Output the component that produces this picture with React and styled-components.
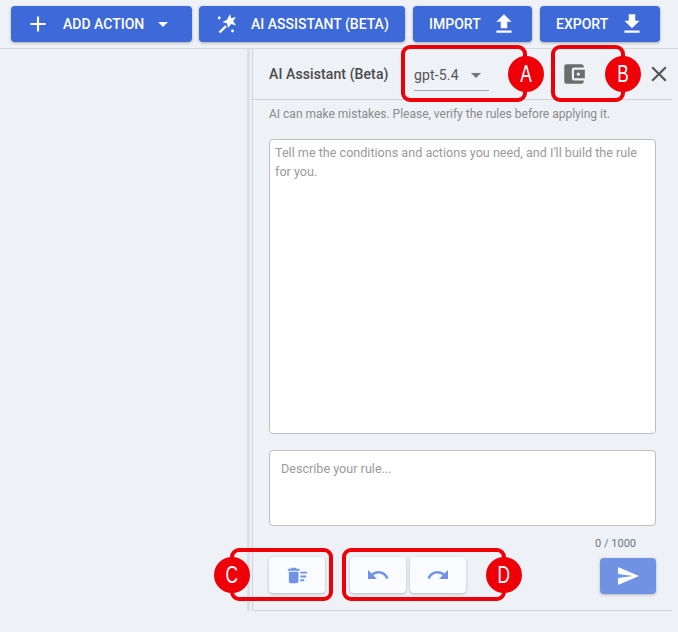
import React from 'react';
import styled, { createGlobalStyle } from 'styled-components';
import {
  MdAdd,
  MdArrowDropDown,
  MdFileUpload,
  MdFileDownload,
  MdAccountBalanceWallet,
  MdClose,
  MdDeleteSweep,
  MdUndo,
  MdRedo,
  MdSend,
} from 'react-icons/md';

const GlobalStyle = createGlobalStyle`
  html, body {
    margin: 0;
    padding: 0;
    background: #eef1f6;
    font-family: Roboto, "Liberation Sans", sans-serif;
  }
  * {
    box-sizing: border-box;
  }
`;

const Page = styled.div`
  position: relative;
  width: 678px;
  height: 632px;
  overflow: hidden;
`;

const Toolbar = styled.div`
  display: flex;
  height: 49px;
  padding: 6px 18px 0 11px;
  border-bottom: 1px solid #d5d8de;
`;

const ActionButton = styled.button`
  display: flex;
  align-items: center;
  gap: ${(p) => p.$gap}px;
  width: ${(p) => p.$width}px;
  height: 36px;
  margin-left: ${(p) => p.$offset || 0}px;
  padding: 0 0 0 ${(p) => p.$pad}px;
  border: 0;
  border-radius: 4px;
  background: #3d69d9;
  color: #fff;
  font-family: Roboto, sans-serif;
  font-size: 14px;
  font-weight: 500;
  text-transform: uppercase;
  box-shadow: 0 1px 3px rgba(0, 0, 0, 0.3);
`;

const AddLabel = styled.span`
  margin: 0 -3px 0 2px;
`;

const Content = styled.div`
  display: flex;
  height: 562px;
`;

const Side = styled.div`
  width: 247px;
`;

const Handle = styled.div`
  width: 3px;
  margin-right: 2px;
  background: #dde0e6;
`;

const Panel = styled.section`
  width: 420px;
  border-left: 1px solid #d0d3d9;
  border-bottom: 1px solid #d0d3d9;
  padding-bottom: 15px;
  display: flex;
  flex-direction: column;
`;

const PanelHeader = styled.header`
  display: flex;
  align-items: center;
  height: 51px;
  padding-left: 16px;
  border-bottom: 1px solid #d0d3d9;
  > * {
    flex: none;
  }
`;

const Title = styled.h2`
  margin: 0;
  width: 145px;
  font-size: 14px;
  font-weight: 500;
  letter-spacing: 0.1px;
  color: #4a4a4a;
`;

const ModelSelect = styled.div`
  display: flex;
  align-items: center;
  justify-content: space-between;
  width: 75px;
  height: 32px;
  margin-top: 2px;
  padding: 0 1px 0 0;
  border-bottom: 1px solid #a9a9a9;
  font-size: 14px;
  letter-spacing: 0.15px;
  color: #555;
  svg {
    color: #757575;
  }
`;

const WalletButton = styled.span`
  display: flex;
  margin-left: 72px;
  color: #6d6d6d;
`;

const CloseButton = styled.span`
  display: flex;
  margin-left: 59px;
  color: #555;
`;

const Hint = styled.p`
  margin: 7px 0 0 16px;
  height: 32px;
  font-size: 12px;
  line-height: 15px;
  color: #8b8b8b;
`;

const Field = styled.div`
  width: 387px;
  height: ${(p) => p.$height}px;
  margin-left: 16px;
  margin-bottom: 16px;
  padding: ${(p) => p.$pad};
  background: #fff;
  border: 1px solid #bdbdbd;
  border-radius: 4px;
  font-size: 12.6px;
  line-height: 19px;
  color: #9a9a9a;
`;

const Counter = styled.div`
  width: 383px;
  height: 15px;
  margin-top: -6px;
  margin-bottom: 6px;
  text-align: right;
  font-size: 11px;
  line-height: 15px;
  color: #6f7680;
`;

const Actions = styled.div`
  display: flex;
  padding-left: 16px;
`;

const IconButton = styled.button`
  display: flex;
  align-items: center;
  justify-content: center;
  width: 56px;
  height: 36px;
  margin-left: ${(p) => p.$offset || 0}px;
  margin-top: ${(p) => (p.$primary ? 1 : 0)}px;
  padding: 0;
  border: 0;
  border-radius: 4px;
  background: ${(p) => (p.$primary ? '#7092e3' : '#f9fbff')};
  color: ${(p) => (p.$primary ? '#fff' : '#7092e3')};
  box-shadow: 0 1px 3px rgba(0, 0, 0, 0.25);
`;

const Callout = styled.div`
  position: absolute;
  left: ${(p) => p.$x}px;
  top: ${(p) => p.$y}px;
  width: ${(p) => p.$w}px;
  height: ${(p) => p.$h}px;
  border: 4px solid #ef0009;
  border-radius: 9px;
`;

const Badge = styled.span`
  position: absolute;
  left: ${(p) => p.$x}px;
  top: ${(p) => p.$y}px;
  display: flex;
  align-items: center;
  justify-content: center;
  width: 36px;
  height: 36px;
  border-radius: 50%;
  background: #ef0009;
`;

const BadgeLetter = styled.span`
  display: block;
  transform: scaleX(0.72);
  color: #fff;
  font-family: "Liberation Sans", sans-serif;
  font-size: 24px;
  line-height: 1;
`;

const WandIcon = () => (
  <svg width="20" height="20" viewBox="0 0 20 20" fill="currentColor">
    <path d="M13 0 L14.2 4.2 L19 3 L16.2 7 L19 11.5 L14.2 10 L11 14 L10.2 9.5 L5.5 8 L10 5.8 Z" />
    <circle cx="2.2" cy="4" r="1.4" />
    <circle cx="15.5" cy="17" r="1.4" />
    <path d="M2.5 18.5 L9 12" stroke="currentColor" strokeWidth="2.4" />
  </svg>
);

const callouts = [
  { x: 401, y: 45, w: 126, h: 57, label: 'A', bx: 508, by: 56 },
  { x: 551, y: 45, w: 74, h: 57, label: 'B', bx: 605, by: 56 },
  { x: 230, y: 548, w: 103, h: 53, label: 'C', bx: 214, by: 557 },
  { x: 342, y: 548, w: 164, h: 53, label: 'D', bx: 486, by: 557 },
];

const App = () => {
  return (
    <Page>
      <GlobalStyle />
      <Toolbar>
        <ActionButton $width={181} $gap={10} $pad={14}>
          <MdAdd size={26} />
          <AddLabel>Add action</AddLabel>
          <MdArrowDropDown size={24} />
        </ActionButton>
        <ActionButton $width={206} $offset={7} $gap={14} $pad={18}>
          <WandIcon />
          AI Assistant (Beta)
        </ActionButton>
        <ActionButton $width={119} $offset={8} $gap={10} $pad={16}>
          Import
          <MdFileUpload size={26} />
        </ActionButton>
        <ActionButton $width={120} $offset={8} $gap={11} $pad={16}>
          Export
          <MdFileDownload size={26} />
        </ActionButton>
      </Toolbar>
      <Content>
        <Side />
        <Handle />
        <Panel>
          <PanelHeader>
            <Title>AI Assistant (Beta)</Title>
            <ModelSelect>
              gpt-5.4
              <MdArrowDropDown size={24} />
            </ModelSelect>
            <WalletButton>
              <MdAccountBalanceWallet size={26} />
            </WalletButton>
            <CloseButton>
              <MdClose size={26} />
            </CloseButton>
          </PanelHeader>
          <Hint>AI can make mistakes. Please, verify the rules before applying it.</Hint>
          <Field $height={295} $pad="3px 5px">
            Tell me the conditions and actions you need, and I'll build the rule for you.
          </Field>
          <Field $height={76} $pad="8px 11px">Describe your rule...</Field>
          <Counter>0 / 1000</Counter>
          <Actions>
            <IconButton>
              <MdDeleteSweep size={23} />
            </IconButton>
            <IconButton $offset={25}>
              <MdUndo size={24} />
            </IconButton>
            <IconButton $offset={4}>
              <MdRedo size={24} />
            </IconButton>
            <IconButton $offset={134} $primary>
              <MdSend size={24} />
            </IconButton>
          </Actions>
        </Panel>
      </Content>
      {callouts.map((c) => (
        <React.Fragment key={c.label}>
          <Callout $x={c.x} $y={c.y} $w={c.w} $h={c.h} />
          <Badge $x={c.bx} $y={c.by}>
            <BadgeLetter>{c.label}</BadgeLetter>
          </Badge>
        </React.Fragment>
      ))}
    </Page>
  );
};

export default App;
